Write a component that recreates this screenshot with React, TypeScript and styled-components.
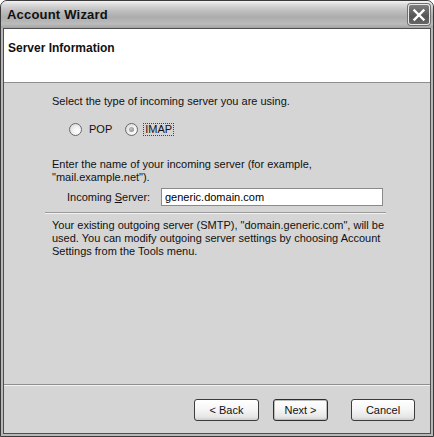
import React from "react";
import styled, { createGlobalStyle } from "styled-components";

const GlobalStyle = createGlobalStyle`
  html, body { margin: 0; padding: 0; background: #ffffff; }
  * { box-sizing: border-box; }
`;

const Window = styled.div`
  width: 434px;
  height: 437px;
  display: flex;
  flex-direction: column;
  border: 1px solid #3a3a3a;
  border-radius: 7px 7px 0 0;
  background: #b8b8b8;
  overflow: hidden;
  font-family: "Liberation Sans", Arial, sans-serif;
  font-size: 11px;
  color: #111;
`;

const TitleBar = styled.div`
  height: 27px;
  flex: none;
  display: flex;
  align-items: center;
  justify-content: space-between;
  padding: 0 3px 0 6px;
  background: linear-gradient(
    to bottom,
    #f4f4f4 0%,
    #dcdcdc 12%,
    #c0c0c0 35%,
    #acacac 60%,
    #bcbcbc 85%,
    #a2a2a2 100%
  );
`;

const TitleText = styled.span`
  font-weight: bold;
  font-size: 13px;
  color: #111;
  letter-spacing: 0.2px;
`;

const CloseButton = styled.div`
  width: 22px;
  height: 21px;
  border-radius: 3px;
  border: 1px solid #e8e8e8;
  background: linear-gradient(to bottom, #7e7e7e, #555555 60%, #666666);
  box-shadow: 0 0 0 1px #707070;
  display: flex;
  align-items: center;
  justify-content: center;
`;

const Client = styled.div`
  flex: 1;
  margin: 0 2px 2px 2px;
  border: 1px solid #4e4e4e;
  display: flex;
  flex-direction: column;
  background: #d5d5d5;
`;

const Header = styled.div`
  height: 54px;
  flex: none;
  background: #ffffff;
  border-bottom: 1px solid #8e8e8e;
  padding: 12px 0 0 4px;
  font-weight: bold;
  font-size: 12px;
`;

const Main = styled.div`
  flex: 1;
  display: flex;
  flex-direction: column;
  padding: 12px 0 0 0;
`;

const Section = styled.div`
  display: flex;
  flex-direction: column;
  padding-left: 48px;
`;

const Line = styled.div<{ $mt?: number }>`
  line-height: 13px;
  margin-top: ${(p) => p.$mt ?? 0}px;
`;

const RadioRow = styled.div`
  display: flex;
  align-items: center;
  height: 14px;
  margin-top: 14px;
  padding-left: 17px;
`;

const RadioOption = styled.label<{ $gap?: number }>`
  display: flex;
  align-items: center;
  margin-right: ${(p) => p.$gap ?? 0}px;
`;

const RadioCircle = styled.span<{ $checked?: boolean }>`
  width: 13px;
  height: 13px;
  border-radius: 50%;
  border: 1px solid #6a6a6a;
  background: radial-gradient(circle at 65% 65%, #ffffff 0%, #f2f2f2 40%, #cfcfcf 100%);
  display: flex;
  align-items: center;
  justify-content: center;
  margin-right: 5px;
  &::after {
    content: "";
    width: 5px;
    height: 5px;
    border-radius: 50%;
    background: ${(p) => (p.$checked ? "radial-gradient(circle at 40% 40%, #c8c8c8, #7a7a7a)" : "transparent")};
  }
`;

const RadioLabel = styled.span<{ $focus?: boolean }>`
  padding: 0 1px;
  line-height: 11px;
  border: 1px dotted ${(p) => (p.$focus ? "#444" : "transparent")};
`;

const FieldRow = styled.div`
  display: flex;
  align-items: center;
  margin-top: 4px;
  padding-left: 15px;
`;

const FieldLabel = styled.span`
  width: 94px;
  u { text-decoration: underline; }
`;

const TextInput = styled.div`
  width: 222px;
  height: 18px;
  border: 1px solid #8a8a8a;
  background: #fff;
  padding: 0 3px;
  line-height: 16px;
  color: #000;
`;

const Separator = styled.div`
  margin: 6px 44px 0 41px;
  height: 2px;
  border-top: 1px solid #9a9a9a;
  border-bottom: 1px solid #f2f2f2;
`;

const Paragraph = styled.div`
  margin-top: 5px;
  padding-left: 48px;
  width: 400px;
  line-height: 13px;
`;

const Footer = styled.div`
  height: 49px;
  flex: none;
  border-top: 1px solid #8e8e8e;
  box-shadow: inset 0 1px 0 #f4f4f4;
  display: flex;
  justify-content: flex-end;
  align-items: flex-start;
  padding: 14px 15px 0 0;
`;

const Button = styled.div<{ $w: number; $ml?: number; $default?: boolean }>`
  width: ${(p) => p.$w}px;
  height: 22px;
  margin-left: ${(p) => p.$ml ?? 0}px;
  border: 1px solid ${(p) => (p.$default ? "#2e2e2e" : "#3c3c3c")};
  border-radius: 3px;
  background: linear-gradient(to bottom, #ffffff 0%, #f6f6f6 45%, #e6e6e6 85%, #cfcfcf 100%);
  box-shadow: ${(p) => (p.$default ? "inset 0 0 0 1px #bdbdbd" : "none")};
  display: flex;
  align-items: center;
  justify-content: center;
  color: #111;
`;

export default function App() {
  return (
    <>
      <GlobalStyle />
      <Window>
        <TitleBar>
          <TitleText>Account Wizard</TitleText>
          <CloseButton>
            <svg width="14" height="14" viewBox="0 0 14 14">
              <path d="M2.5 2.5 L11.5 11.5 M11.5 2.5 L2.5 11.5" stroke="#ffffff" strokeWidth="2.4" strokeLinecap="square" />
            </svg>
          </CloseButton>
        </TitleBar>
        <Client>
          <Header>Server Information</Header>
          <Main>
            <Section>
              <Line>Select the type of incoming server you are using.</Line>
              <RadioRow>
                <RadioOption $gap={11}>
                  <RadioCircle />
                  <RadioLabel>POP</RadioLabel>
                </RadioOption>
                <RadioOption>
                  <RadioCircle $checked />
                  <RadioLabel $focus>IMAP</RadioLabel>
                </RadioOption>
              </RadioRow>
              <Line $mt={22}>Enter the name of your incoming server (for example,</Line>
              <Line>"mail.example.net").</Line>
              <FieldRow>
                <FieldLabel>
                  Incoming <u>S</u>erver:
                </FieldLabel>
                <TextInput>generic.domain.com</TextInput>
              </FieldRow>
            </Section>
            <Separator />
            <Paragraph>
              Your existing outgoing server (SMTP), "domain.generic.com", will be used. You can modify outgoing server
              settings by choosing Account Settings from the Tools menu.
            </Paragraph>
          </Main>
          <Footer>
            <Button $w={65}>&lt; Back</Button>
            <Button $w={55} $ml={14} $default>
              Next &gt;
            </Button>
            <Button $w={64} $ml={23}>
              Cancel
            </Button>
          </Footer>
        </Client>
      </Window>
    </>
  );
}
